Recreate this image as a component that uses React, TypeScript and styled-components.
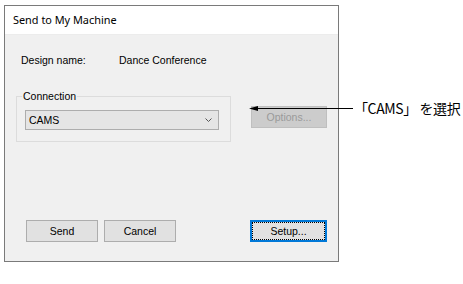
import React from 'react';
import styled, { createGlobalStyle } from 'styled-components';

const GlobalStyle = createGlobalStyle`
  html, body {
    margin: 0;
    padding: 0;
    background: #ffffff;
  }
  body {
    font-family: "Liberation Sans", Arial, sans-serif;
    font-size: 10.5px;
    color: #000000;
  }
`;

const Page = styled.div`
  position: relative;
  width: 463px;
  height: 284px;
  padding: 5px 0 0 4px;
  box-sizing: border-box;
`;

const Dialog = styled.div`
  width: 335px;
  height: 257px;
  box-sizing: border-box;
  border: 1px solid #7a7a7a;
  display: flex;
  flex-direction: column;
  background: #f0f0f0;
`;

const TitleBar = styled.div`
  height: 29px;
  flex: none;
  background: #ffffff;
  border-bottom: 1px solid #ececec;
  box-sizing: border-box;
  display: flex;
  align-items: center;
  padding: 0 0 1px 8px;
  font-family: "Noto Sans", "Liberation Sans", sans-serif;
  font-size: 10.9px;
  color: #000000;
`;

const Body = styled.div`
  flex: 1;
  display: flex;
  flex-direction: column;
  padding: 18px 11px 19px 11px;
`;

const InfoRow = styled.div`
  display: flex;
  height: 14px;
  align-items: center;
  padding-left: 5px;
`;

const InfoLabel = styled.span`
  width: 98px;
`;

const MiddleRow = styled.div`
  display: flex;
  align-items: flex-start;
  margin-top: 23px;
`;

const Group = styled.fieldset`
  width: 215px;
  height: 52px;
  box-sizing: border-box;
  margin: 0;
  padding: 8px 11px 0 8px;
  border: 1px solid #dcdcdc;
`;

const Legend = styled.legend`
  padding: 0 1px;
  margin-left: -3px;
  font-size: 10.5px;
  line-height: 12px;
  color: #000000;
`;

const Combo = styled.div`
  height: 20px;
  box-sizing: border-box;
  border: 1px solid #adadad;
  background: #e5e5e5;
  display: flex;
  align-items: center;
  justify-content: space-between;
  padding: 0 6px 0 3px;
`;

const Button = styled.div<{ $disabled?: boolean; $focused?: boolean; $width?: number }>`
  width: ${(p) => p.$width ?? 72}px;
  height: 22px;
  box-sizing: border-box;
  display: flex;
  align-items: center;
  justify-content: center;
  background: ${(p) => (p.$disabled ? '#cccccc' : '#e1e1e1')};
  border: ${(p) => (p.$focused ? '2px solid #0078d7' : p.$disabled ? '1px solid #bfbfbf' : '1px solid #adadad')};
  color: ${(p) => (p.$disabled ? '#9a9a9a' : '#000000')};
  font-size: 10.5px;
`;

const FocusRect = styled.div`
  width: 100%;
  height: 100%;
  box-sizing: border-box;
  border: 1px dotted #000000;
  display: flex;
  align-items: center;
  justify-content: center;
`;

const OptionsSlot = styled.div`
  margin-left: 20px;
  margin-top: 16px;
`;

const Spacer = styled.div`
  flex: 1;
`;

const ButtonRow = styled.div`
  display: flex;
  align-items: center;
  gap: 6px;
  padding-left: 10px;
`;

const Callout = styled.div`
  position: absolute;
  left: 249px;
  top: 99px;
  display: flex;
  align-items: center;
  height: 18px;
`;

const CalloutText = styled.span`
  font-family: "Noto Sans CJK JP", "Noto Sans", sans-serif;
  font-size: 14px;
  line-height: 18px;
  color: #000000;
  margin-left: 1px;
  letter-spacing: -0.4px;
`;

const Chevron = () => (
  <svg width="7" height="4" viewBox="0 0 7 4">
    <path d="M0.5 0.5 L3.5 3.5 L6.5 0.5" fill="none" stroke="#555" strokeWidth="1" />
  </svg>
);

const Arrow = () => (
  <svg width="104" height="9" viewBox="0 0 104 9">
    <line x1="3" y1="4.5" x2="104" y2="4.5" stroke="#000" strokeWidth="1" />
    <path d="M0 4.5 L9 2 L9 7 Z" fill="#000" />
  </svg>
);

export default function App() {
  return (
    <Page>
      <GlobalStyle />
      <Dialog>
        <TitleBar>Send to My Machine</TitleBar>
        <Body>
          <InfoRow>
            <InfoLabel>Design name:</InfoLabel>
            <span>Dance Conference</span>
          </InfoRow>
          <MiddleRow>
            <Group>
              <Legend>Connection</Legend>
              <Combo>
                <span>CAMS</span>
                <Chevron />
              </Combo>
            </Group>
            <OptionsSlot>
              <Button $disabled $width={76}>Options...</Button>
            </OptionsSlot>
          </MiddleRow>
          <Spacer />
          <ButtonRow>
            <Button>Send</Button>
            <Button>Cancel</Button>
            <Spacer />
            <Button $focused $width={77}>
              <FocusRect>Setup...</FocusRect>
            </Button>
          </ButtonRow>
        </Body>
      </Dialog>
      <Callout>
        <Arrow />
        <CalloutText>「CAMS」 を選択</CalloutText>
      </Callout>
    </Page>
  );
}
